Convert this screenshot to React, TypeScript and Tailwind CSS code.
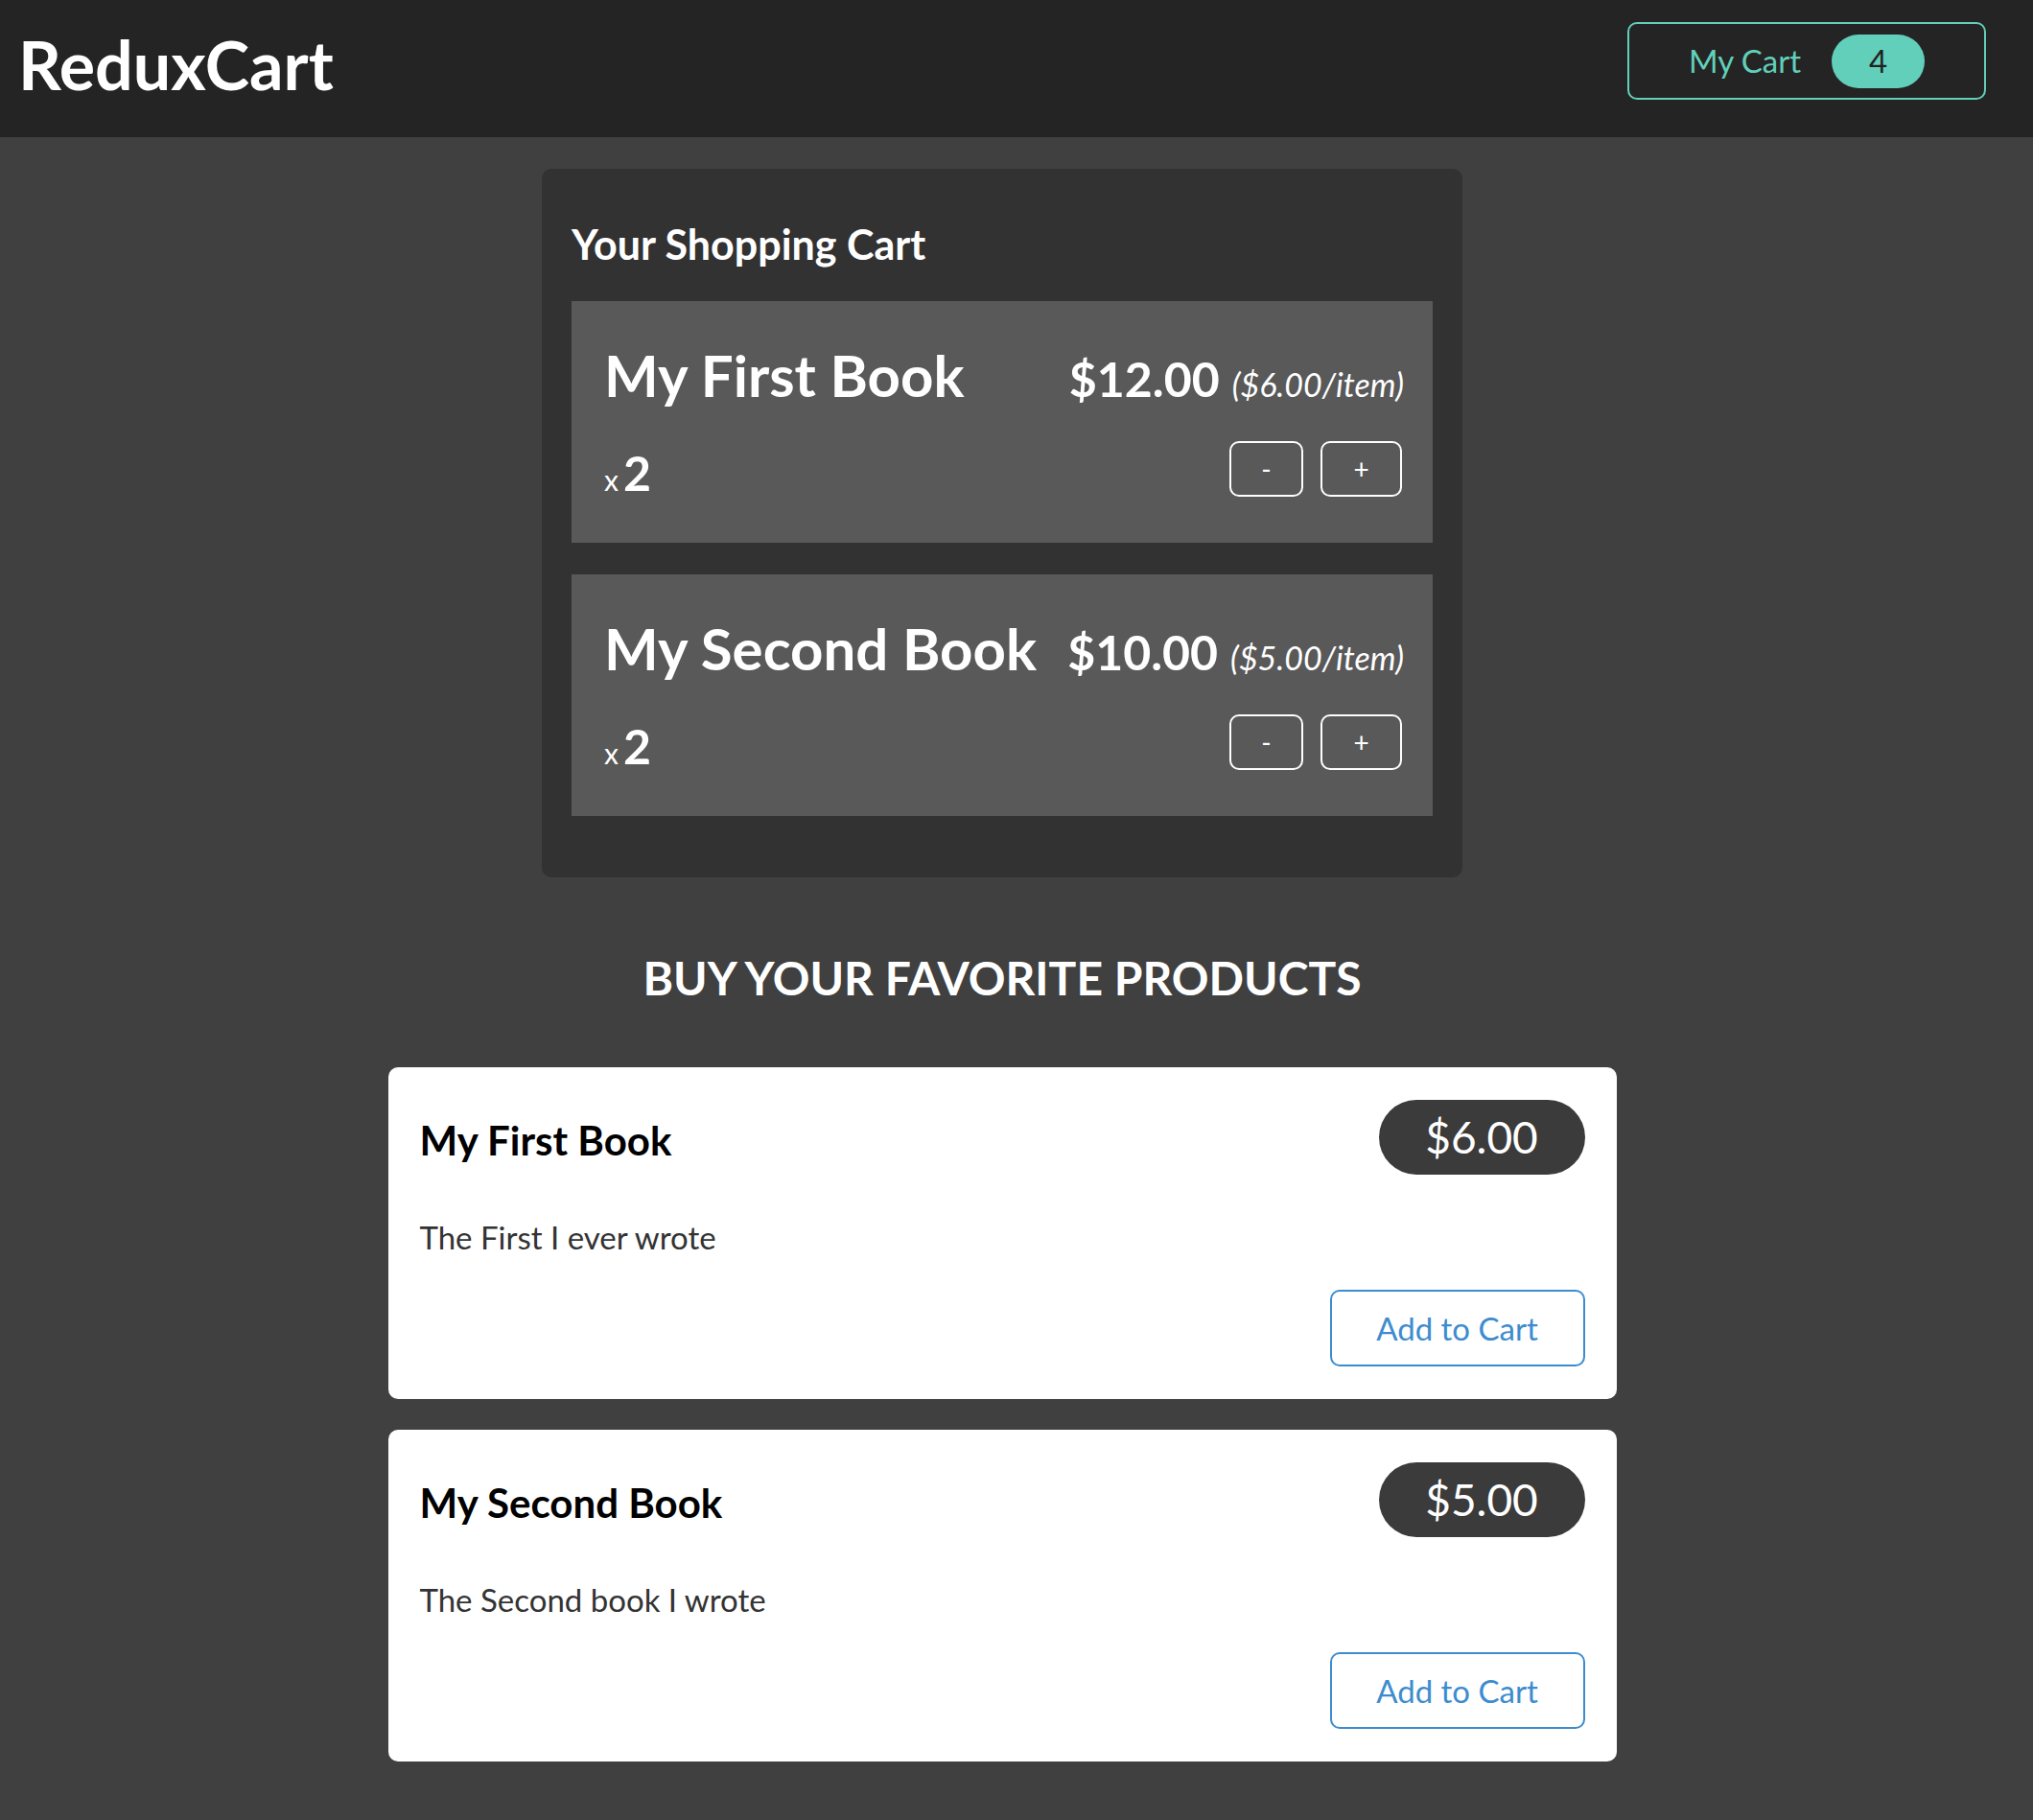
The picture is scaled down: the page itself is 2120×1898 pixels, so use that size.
import React from "react";

const cartItems = [
  { title: "My First Book", total: "$12.00", each: "$6.00", qty: 2 },
  { title: "My Second Book", total: "$10.00", each: "$5.00", qty: 2 },
];

const products = [
  { title: "My First Book", price: "$6.00", desc: "The First I ever wrote" },
  { title: "My Second Book", price: "$5.00", desc: "The Second book I wrote" },
];

export default function App() {
  return (
    <div className="min-h-screen w-full bg-[#404040] font-['Lato',sans-serif] text-white">
      <header className="h-[143px] w-full bg-[#242424]">
        <div className="flex w-[2090px] items-start justify-between px-[19px]">
          <h1 className="mt-[32px] text-[70px] font-bold leading-none">ReduxCart</h1>
          <button className="mt-[23px] flex h-[81px] w-[374px] items-center justify-center gap-[32px] rounded-[10px] border-2 border-[#62cfba] text-[#62cfba]">
            <span className="text-[33px] leading-none">My Cart</span>
            <span className="flex h-[56px] w-[97px] items-center justify-center rounded-full bg-[#62cfba] text-[33px] leading-none text-[#222]">
              4
            </span>
          </button>
        </div>
      </header>

      <main className="flex w-[2090px] flex-col items-center pb-[62px]">
        <section className="mt-[33px] w-[960px] rounded-[10px] bg-[#323232] px-[31px] pb-[64px] pt-[57px]">
          <h2 className="text-[43px] font-bold leading-none">Your Shopping Cart</h2>
          <ul className="mt-[38px] flex flex-col gap-[33px]">
            {cartItems.map((it) => (
              <li key={it.title} className="bg-[#595959] pb-[48px] pl-[34px] pr-[32px] pt-[47px]">
                <div className="flex items-baseline justify-between">
                  <h3 className="text-[60px] font-bold leading-none">{it.title}</h3>
                  <div className="mr-[-2px] flex items-baseline gap-[13px]">
                    <span className="text-[50px] font-bold leading-none">{it.total}</span>
                    <span className="text-[34px] italic leading-none">({it.each}/item)</span>
                  </div>
                </div>
                <div className="mt-[39px] flex items-center justify-between">
                  <div className="mt-[8px] flex items-baseline gap-[5px]">
                    <span className="text-[30px] leading-none">x</span>
                    <span className="text-[50px] font-bold leading-none">{it.qty}</span>
                  </div>
                  <div className="flex gap-[18px]">
                    <button className="flex h-[58px] w-[77px] items-center justify-center rounded-[10px] border-2 border-white text-[28px] leading-none text-white">
                      -
                    </button>
                    <button className="flex h-[58px] w-[85px] items-center justify-center rounded-[10px] border-2 border-white text-[28px] leading-none text-white">
                      +
                    </button>
                  </div>
                </div>
              </li>
            ))}
          </ul>
        </section>

        <h2 className="mt-[81px] text-[48px] font-bold uppercase leading-none">Buy your favorite products</h2>

        <ul className="mt-[69px] flex w-[1281px] flex-col gap-[32px]">
          {products.map((p) => (
            <li key={p.title} className="rounded-[10px] bg-white pb-[34px] pl-[33px] pr-[33px] pt-[34px] text-black">
              <div className="flex items-center justify-between">
                <h3 className="mt-[6px] text-[42px] font-bold leading-none">{p.title}</h3>
                <span className="flex h-[78px] w-[215px] items-center justify-center rounded-full bg-[#3b3b3b] text-[46px] leading-none text-white">
                  {p.price}
                </span>
              </div>
              <p className="mt-[49px] text-[33px] leading-none text-[#333]">{p.desc}</p>
              <div className="mt-[38px] flex justify-end">
                <button className="flex h-[80px] w-[266px] items-center justify-center rounded-[10px] border-2 border-[#3d8ccf] text-[33px] leading-none text-[#3d8ccf]">
                  Add to Cart
                </button>
              </div>
            </li>
          ))}
        </ul>
      </main>
    </div>
  );
}
